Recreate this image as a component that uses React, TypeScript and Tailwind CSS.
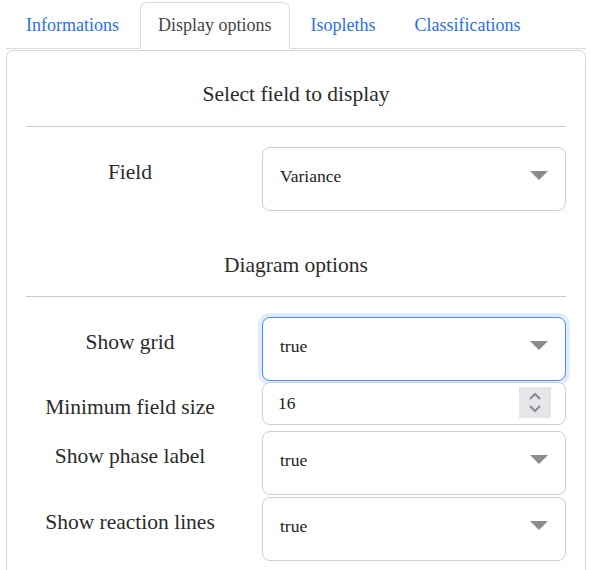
import React from "react";

const tabs = ["Informations", "Display options", "Isopleths", "Classifications"];

const Caret = () => (
    <svg width="18" height="10" viewBox="0 0 18 10" className="shrink-0">
        <polygon points="0,0 18,0 9,9" fill="#8c8c8c" />
    </svg>
);

const FakeSelect = ({ value, focused = false }: { value: string; focused?: boolean }) => (
    <div
        className={
            "h-[64px] rounded-[8px] border bg-white flex items-start justify-between pl-[17px] pr-[17px] pt-[15px] " +
            (focused
                ? "border-[#4d8cf5] shadow-[0_0_0_4px_rgba(13,110,253,0.13)]"
                : "border-[#cfcfcf]")
        }
    >
        <span className="text-[17.5px] leading-[26px] text-[#222]">{value}</span>
        <span className="pt-[8px]">
            <Caret />
        </span>
    </div>
);

const NumberInput = ({ value }: { value: string }) => (
    <div className="h-[43px] rounded-[8px] border border-[#cfcfcf] bg-white flex items-start justify-between pl-[15px] pr-[14px] pt-[4px]">
        <span className="text-[17.5px] leading-[26px] text-[#222] pt-[3px]">{value}</span>
        <div className="w-[32px] h-[31px] bg-[#e6e6ea] flex flex-col items-center justify-center gap-[3px]">
            <svg width="14" height="9" viewBox="0 0 14 9">
                <polyline points="2,7 7,2 12,7" fill="none" stroke="#8a8a8e" strokeWidth="2" />
            </svg>
            <svg width="14" height="9" viewBox="0 0 14 9">
                <polyline points="2,2 7,7 12,2" fill="none" stroke="#8a8a8e" strokeWidth="2" />
            </svg>
        </div>
    </div>
);

const Row = ({ label, children, className = "" }) => (
    <div className={"grid grid-cols-[208px_1fr] gap-x-[28px] " + className}>
        <div className="text-center pt-[11px] text-[21.5px] leading-[28px] text-[#2b2b2b] whitespace-nowrap">{label}</div>
        <div>{children}</div>
    </div>
);

const SectionTitle = ({ children, className = "", gap = "mt-[15px]" }) => (
    <div className={className}>
        <div className="text-center text-[21.5px] leading-[32px] text-[#2b2b2b]">{children}</div>
        <div className={gap + " h-px bg-[#cccccc]"} />
    </div>
);

export default function App() {
    return (
        <div className="w-[590px] h-[570px] overflow-hidden bg-white font-['Liberation_Serif',serif] pl-[6px] pr-[4px]">
            <div className="flex items-end h-[49px] border-b border-[#dcdcdc] pl-[2px] gap-[3px]">
                {tabs.map((tab) => {
                    const active = tab === "Display options";
                    return (
                        <div
                            key={tab}
                            className={
                                "h-[47px] px-[17px] flex items-center text-[18px] -mb-px rounded-t-[7px] border " +
                                (active
                                    ? "border-[#dcdcdc] border-b-white bg-white text-[#444]"
                                    : "border-transparent text-[#2a6ff0]")
                            }
                        >
                            {tab}
                        </div>
                    );
                })}
            </div>
            <div className="mt-px border border-[#d4d4d4] rounded-t-[7px] h-[600px] px-[19px] pt-[27px]">
                <SectionTitle gap="mt-[16px]">Select field to display</SectionTitle>
                <Row label="Field" className="mt-[20px]">
                    <FakeSelect value="Variance" />
                </Row>
                <SectionTitle className="mt-[38px]">Diagram options</SectionTitle>
                <Row label="Show grid" className="mt-[20px]">
                    <FakeSelect value="true" focused />
                </Row>
                <Row label="Minimum field size" className="mt-[1px]">
                    <NumberInput value="16" />
                </Row>
                <Row label="Show phase label" className="mt-[6px]">
                    <FakeSelect value="true" />
                </Row>
                <Row label="Show reaction lines" className="mt-[2px]">
                    <FakeSelect value="true" />
                </Row>
            </div>
        </div>
    );
}
